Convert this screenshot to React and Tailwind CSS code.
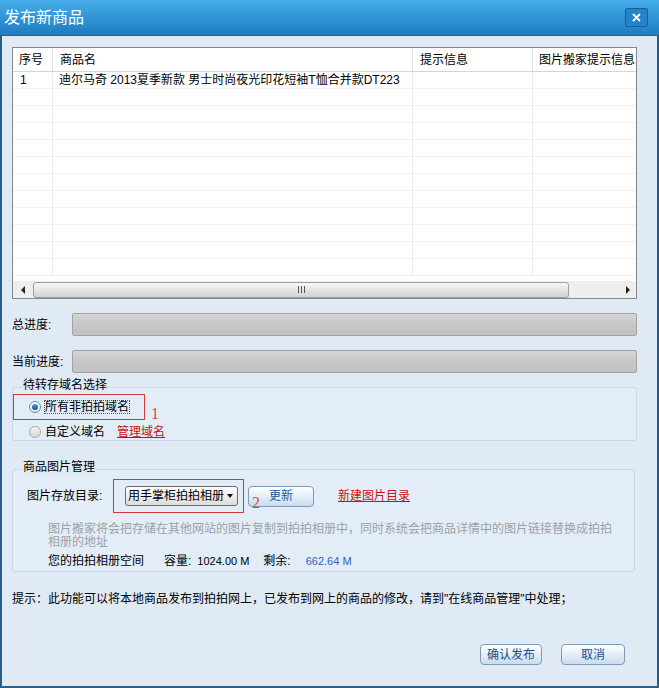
import React from "react";

const font = {
  fontFamily: '"Liberation Sans", "Noto Sans CJK SC", sans-serif',
};

function Radio({ checked }) {
  return (
    <span
      className={
        "w-[12px] h-[12px] rounded-full border flex items-center justify-center shrink-0 " +
        (checked
          ? "border-[#6f8aa6] bg-gradient-to-b from-[#ffffff] to-[#dde6ef]"
          : "border-[#a0a8b0] bg-gradient-to-b from-[#f4f4f4] to-[#d8d8d8]")
      }
    >
      {checked && (
        <span className="w-[6px] h-[6px] rounded-full bg-gradient-to-b from-[#4f9ae0] to-[#0f4c8c]" />
      )}
    </span>
  );
}

function ProgressRow({ label, mt }) {
  return (
    <div className={"flex items-center " + mt}>
      <span className="w-[60px] text-[12px] text-black leading-none">{label}</span>
      <div className="flex-1 h-[23px] rounded-[2px] border border-[#a2a2a2] bg-gradient-to-b from-[#d6d6d6] via-[#c6c6c6] to-[#c2c2c2]" />
    </div>
  );
}

export default function App() {
  const rows = Array.from({ length: 12 });

  return (
    <div className="w-[659px] h-[688px] flex flex-col bg-[#dfeaf5] overflow-hidden" style={font}>
      {/* title bar */}
      <div className="h-[36px] shrink-0 bg-gradient-to-b from-[#45ade9] to-[#1e7cc1] border-b border-[#1a68a6] flex items-center justify-between pl-[4px] pr-[11px]">
        <span className="text-white text-[16px] leading-none">发布新商品</span>
        <div className="w-[23px] h-[19px] border border-[#17609a] bg-[#2583c6] rounded-[2px] flex items-center justify-center">
          <svg width="9" height="9" viewBox="0 0 9 9">
            <path d="M1 1 L8 8 M8 1 L1 8" stroke="white" strokeWidth="1.8" />
          </svg>
        </div>
      </div>

      <div className="flex-1 flex flex-col border-x-2 border-b-2 border-[#2a5f8c] pl-[10px] pr-[20px] pt-[11px]">
        {/* table */}
        <div className="h-[252px] shrink-0 border border-[#828790] bg-white flex flex-col">
          <div className="h-[24px] shrink-0 flex border-b border-[#d5d5d5] text-[12px] text-black">
            <div className="w-[40px] border-r border-[#e3e3e3] flex items-center pl-[6px]">序号</div>
            <div className="w-[360px] border-r border-[#e3e3e3] flex items-center pl-[7px]">商品名</div>
            <div className="w-[120px] border-r border-[#e3e3e3] flex items-center pl-[7px]">提示信息</div>
            <div className="flex-1 flex items-center pl-[6px] whitespace-nowrap overflow-hidden">图片搬家提示信息</div>
          </div>
          <div className="flex-1 overflow-hidden">
            {rows.map((_, i) => (
              <div key={i} className="h-[17px] flex border-b border-[#f0f0f0] text-[12px] text-black">
                <div className="w-[40px] border-r border-[#ececec] flex items-center pl-[7px]">{i === 0 ? "1" : ""}</div>
                <div className="w-[360px] border-r border-[#ececec] flex items-center pl-[6px] whitespace-nowrap">
                  {i === 0 ? "迪尔马奇 2013夏季新款 男士时尚夜光印花短袖T恤合并款DT223" : ""}
                </div>
                <div className="w-[120px] border-r border-[#ececec]" />
                <div className="flex-1" />
              </div>
            ))}
          </div>
          {/* horizontal scrollbar */}
          <div className="h-[17px] shrink-0 bg-[#eeeeee] flex items-center">
            <div className="w-[20px] flex items-center justify-center">
              <span className="w-0 h-0 border-y-[4px] border-y-transparent border-r-[4px] border-r-[#222]" />
            </div>
            <div className="w-[536px] h-[16px] rounded-[3px] border border-[#9c9c9c] bg-gradient-to-b from-[#f7f7f7] to-[#d2d2d2] flex items-center justify-center">
              <span className="flex gap-[2px]">
                <span className="w-[1px] h-[7px] bg-[#555]" />
                <span className="w-[1px] h-[7px] bg-[#555]" />
                <span className="w-[1px] h-[7px] bg-[#555]" />
              </span>
            </div>
            <div className="flex-1 flex items-center justify-end pr-[6px]">
              <span className="w-0 h-0 border-y-[4px] border-y-transparent border-l-[4px] border-l-[#222]" />
            </div>
          </div>
        </div>

        <ProgressRow label="总进度:" mt="mt-[14px]" />
        <ProgressRow label="当前进度:" mt="mt-[14px]" />

        {/* group 1 */}
        <div className="relative mt-[14px] h-[54px] border border-[#c9d8e7] rounded-[3px] bg-[#e3edf7] pt-[6px]">
          <span className="absolute left-[9px] -top-[10px] px-[1px] bg-[#dfeaf5] text-[12px] text-black leading-[14px]">待转存域名选择</span>
          <div className="flex items-end">
            <div className="w-[132px] h-[26px] border border-[#d33a3a] flex items-center pl-[15px] gap-[3px]">
              <Radio checked />
              <span className="text-[12px] text-black leading-none border border-dotted border-[#555]">所有非拍拍域名</span>
            </div>
            <span className="ml-[6px] -mb-[2px] text-[16px] text-[#d84a3a] leading-none" style={{ fontFamily: '"Liberation Serif", serif' }}>1</span>
          </div>
          <div className="flex items-center pl-[16px] mt-[4px] h-[16px] gap-[4px]">
            <Radio />
            <span className="text-[12px] text-black leading-none">自定义域名</span>
            <span className="ml-[8px] text-[12px] text-[#cc1111] underline leading-none">管理域名</span>
          </div>
        </div>

        {/* group 2 */}
        <div className="relative mt-[28px] h-[103px] mr-[2px] border border-[#c9d8e7] rounded-[3px] bg-[#e3edf7] pt-[9px]">
          <span className="absolute left-[9px] -top-[10px] px-[1px] bg-[#dfeaf5] text-[12px] text-black leading-[14px]">商品图片管理</span>
          <div className="flex items-center pl-[14px]">
            <span className="w-[86px] text-[12px] text-black leading-none">图片存放目录:</span>
            <div className="w-[131px] h-[34px] border border-[#d33a3a] flex items-center pl-[11px]">
              <div className="w-[113px] h-[20px] rounded-[3px] border border-[#6b6b6b] bg-gradient-to-b from-[#ffffff] to-[#dcdcdc] flex items-center justify-between pl-[2px] pr-[4px]">
                <span className="text-[12px] text-black leading-none whitespace-nowrap">用手掌柜拍拍相册</span>
                <span className="w-0 h-0 border-x-[3px] border-x-transparent border-t-[4px] border-t-[#111]" />
              </div>
            </div>
            <div className="relative ml-[4px] w-[66px] h-[21px] rounded-[4px] border border-[#7f9ab5] bg-gradient-to-b from-[#ffffff] to-[#c9dcef] flex items-center justify-center">
              <span className="text-[12px] text-[#1d5c9c] leading-none">更新</span>
              <span className="absolute left-[3px] top-[8px] text-[16px] text-[#d84a3a] leading-none" style={{ fontFamily: '"Liberation Serif", serif' }}>2</span>
            </div>
            <span className="ml-[24px] text-[12px] text-[#cc1111] underline leading-none">新建图片目录</span>
          </div>
          <p className="mt-[10px] pl-[35px] pr-[20px] text-[12px] text-[#9ba1a8] leading-[13px]">
            图片搬家将会把存储在其他网站的图片复制到拍拍相册中，同时系统会把商品详情中的图片链接替换成拍拍相册的地址
          </p>
          <div className="mt-[6px] pl-[35px] flex items-center text-[12px] leading-none">
            <span className="text-black">您的拍拍相册空间</span>
            <span className="ml-[20px] text-black">容量:</span>
            <span className="ml-[6px] text-[11px] text-black">1024.00 M</span>
            <span className="ml-[14px] text-black">剩余:</span>
            <span className="ml-[15px] text-[11px] text-[#2b62b4]">662.64 M</span>
          </div>
        </div>

        <p className="mt-[21px] text-[12px] text-black leading-none">
          提示：此功能可以将本地商品发布到拍拍网上，已发布到网上的商品的修改，请到"在线商品管理"中处理；
        </p>

        <div className="mt-[39px] flex justify-end gap-[19px] pr-[12px]">
          <button className="w-[62px] h-[21px] rounded-[4px] border border-[#7f9ab5] bg-gradient-to-b from-[#ffffff] to-[#c9dcef] text-[12px] text-[#1d4f86] leading-none">
            确认发布
          </button>
          <button className="w-[64px] h-[21px] rounded-[4px] border border-[#7f9ab5] bg-gradient-to-b from-[#ffffff] to-[#c9dcef] text-[12px] text-[#1d4f86] leading-none">
            取消
          </button>
        </div>
      </div>
    </div>
  );
}
